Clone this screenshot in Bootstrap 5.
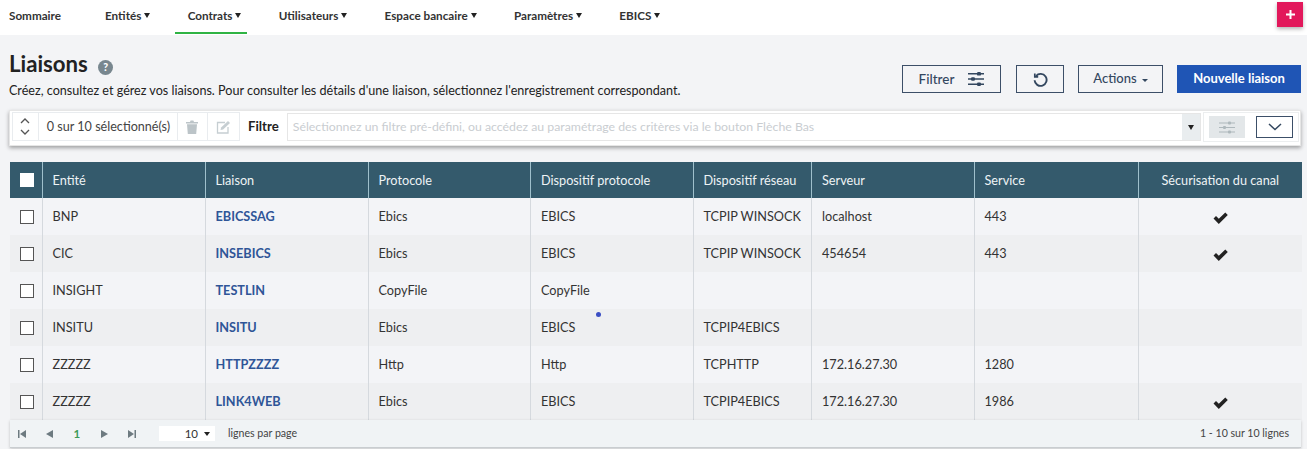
<!DOCTYPE html>
<html lang="fr">
<head>
  <meta charset="UTF-8" />
  <meta name="viewport" content="width=device-width, initial-scale=1" />
  <title>Liaisons</title>
  <link href="https://cdn.jsdelivr.net/npm/bootstrap@5.3.3/dist/css/bootstrap.min.css" rel="stylesheet" />
  <style>
    html, body { height: 449px; overflow: hidden; }
    body { background: #f3f4f6; font-family: Lato, "Liberation Sans", sans-serif; color: #2b2b2b; font-size: 12.7px; }

    /* barre du haut */
    .top-bar { height: 35px; background: #fff; padding-left: 9px; padding-right: 4px; }
    .top-link { position: relative; height: 35px; line-height: 31px; font-size: 11.7px; font-weight: 700; color: #333; text-decoration: none; white-space: nowrap; display: block; margin-right: 37.3px; }
    .top-link:first-child { margin-right: 44px; }
    .top-link.current::after { content: ""; position: absolute; left: -13px; right: -6px; bottom: 1px; height: 2px; background: #2fb344; }
    .caret-down { display: inline-block; border: 3.5px solid transparent; border-top: 5px solid #222; border-bottom: 0; margin-left: 3px; vertical-align: 2px; }
    .plus-btn { width: 26px; height: 25px; margin-top: 2px; background: #e2185b; color: #fff; border: 0; padding: 0; box-shadow: 0 2px 4px rgba(0,0,0,.3); display: flex; align-items: center; justify-content: center; }

    /* titre */
    .page-head { padding: 16px 6px 0 9px; height: 75px; }
    .page-title { font-size: 22.2px; font-weight: 700; line-height: 26px; margin: 0; color: #222; }
    .page-desc { font-size: 12.6px; line-height: 16px; margin: 6px 0 0; color: #222; white-space: nowrap; }
    .help-dot { display: inline-flex; width: 15px; height: 15px; border-radius: 50%; background: #78878f; color: #fff; font-size: 10.5px; font-weight: 900; align-items: center; justify-content: center; margin-left: 5px; vertical-align: 1px; }
    .head-btns { padding-top: 14px; gap: 14px; }
    .act-btn { height: 28px; border: 1px solid #3c4f68; border-radius: 0; background: transparent; color: #33475f; font-size: 13.5px; font-weight: 500; padding: 0; display: flex; align-items: center; justify-content: center; }
    .act-filter { width: 99px; gap: 14px; }
    .act-reset { width: 48px; margin-left: 1px; }
    .act-actions { width: 85px; font-size: 13px; }
    .act-new { width: 124px; background: #1f55b5; border-color: #1f55b5; color: #fff; font-size: 13px; font-weight: 700; }
    .caret-small { display: inline-block; border: 3px solid transparent; border-top: 3px solid #33475f; border-bottom: 0; margin-left: 5px; margin-top: 2px; }

    /* barre filtre */
    .filter-bar { margin: 0 6px 0 9px; height: 36px; background: #fff; box-shadow: 0 2px 4px rgba(0,0,0,.35); padding: 1px 1px 0 2px; border: 1px solid #e6e6e6; display: flex; align-items: flex-start; }
    .sel-group { display: flex; align-items: center; border: 1px solid #e9ecef; height: 29px; width: 228px; flex: none; }
    .sel-arrows { width: 26px; height: 100%; border-right: 1px solid #e9ecef; display: flex; flex-direction: column; align-items: center; justify-content: center; gap: 5px; }
    .sel-count { width: 140px; height: 100%; line-height: 27px; padding-left: 8px; font-size: 12.6px; color: #444; border-right: 1px solid #e9ecef; white-space: nowrap; }
    .sel-icon { width: 31px; height: 100%; display: flex; align-items: center; justify-content: center; }
    .filter-label { font-size: 13.2px; font-weight: 700; line-height: 28px; padding: 0 8px; color: #222; }
    .filter-input { flex: 1; height: 28px; margin-top: 1px; border: 1px solid #e6e6e6; background: #fff; display: flex; align-items: center; justify-content: space-between; min-width: 0; }
    .filter-input span { font-size: 12.3px; color: #c9cdd1; padding-left: 5px; white-space: nowrap; }
    .filter-drop { width: 18px; height: 100%; background: #e9edef; display: flex; align-items: center; justify-content: center; }
    .filter-drop i { display: block; border: 3.5px solid transparent; border-top: 5px solid #222; border-bottom: 0; }
    .filter-tools { width: 96px; height: 30px; margin-left: 2px; border: 1px solid #eceeef; flex: none; display: flex; align-items: center; gap: 11px; padding-left: 5px; }
    .tool-off { width: 36px; height: 22px; background: #e3e7e9; display: flex; align-items: center; justify-content: center; }
    .tool-on { width: 37px; height: 22px; border: 1px solid #3c4f68; background: #fff; display: flex; align-items: center; justify-content: center; }

    /* tableau */
    .grid-wrap { margin: 16px 6px 0 10px; }
    .grid-table { table-layout: fixed; width: 1291px; border-collapse: collapse; margin: 0; }
    .grid-table th { background: #345a6c; color: #eef3f5; font-weight: 400; font-size: 12.7px; height: 36px; padding: 1px 10px 0; border-left: 1px solid #9fc0cc; border-bottom: 0; vertical-align: middle; white-space: nowrap; }
    .grid-table th:first-child, .grid-table td:first-child { border-left: 0; padding: 0 0 0 10px; }
    .grid-table td { height: 37px; font-size: 12.7px; padding: 0 10px; color: #333; border-left: 1px solid #d5d9de; border-bottom: 0; vertical-align: middle; white-space: nowrap; background: #f3f4f7; }
    .grid-table tr.alt td { background: #eeeff1; }
    .grid-table td a { color: #2f5597; font-weight: 700; text-decoration: none; }
    .grid-table .mid { text-align: center; }
    .tick-box { display: block; width: 14px; height: 14px; border: 1px solid #555; background: #fff; }
    .tick-box.head { border-color: #fff; }
    .spot { position: absolute; left: 596px; top: 312px; width: 5px; height: 5px; border-radius: 50%; background: #3b4fc4; }

    /* pied */
    .grid-foot { height: 28px; background: #f0f3f5; border-bottom: 1px solid #c9cdd0; box-shadow: 0 1px 3px rgba(0,0,0,.2); font-size: 10.6px; color: #444; padding: 0 12px 0 0; display: flex; align-items: center; }
    .pager-item { width: 27.5px; flex: none; display: flex; justify-content: center; align-items: center; }
    .pager-item:first-child { margin-left: -2px; }
    .page-now { color: #3c9a58; font-weight: 700; font-size: 11.5px; }
    .size-box { width: 56px; height: 15px; background: #fff; margin-left: 13.5px; display: flex; align-items: center; justify-content: flex-end; gap: 6px; padding-right: 5px; font-size: 11.5px; color: #333; }
    .size-box i { display: block; border: 3.5px solid transparent; border-top: 4px solid #222; border-bottom: 0; }
    .size-label { margin-left: 13px; }
  </style>
</head>
<body>
  <nav class="top-bar d-flex justify-content-between">
    <div class="d-flex">
      <a class="top-link" href="#">Sommaire</a>
      <a class="top-link" href="#">Entités<span class="caret-down"></span></a>
      <a class="top-link current" href="#">Contrats<span class="caret-down"></span></a>
      <a class="top-link" href="#">Utilisateurs<span class="caret-down"></span></a>
      <a class="top-link" href="#">Espace bancaire<span class="caret-down"></span></a>
      <a class="top-link" href="#">Paramètres<span class="caret-down"></span></a>
      <a class="top-link" href="#">EBICS<span class="caret-down"></span></a>
    </div>
    <button class="plus-btn" type="button" aria-label="Ajouter">
      <svg width="11" height="11" viewBox="0 0 11 11"><path d="M5.5 1v9M1 5.5h9" stroke="#fff" stroke-width="2"/></svg>
    </button>
  </nav>

  <div class="page-head d-flex justify-content-between">
    <div>
      <h1 class="page-title">Liaisons <span class="help-dot">?</span></h1>
      <p class="page-desc">Créez, consultez et gérez vos liaisons. Pour consulter les détails d'une liaison, sélectionnez l'enregistrement correspondant.</p>
    </div>
    <div class="head-btns d-flex">
      <button class="act-btn act-filter" type="button">Filtrer
        <svg width="16" height="14" viewBox="0 0 16 14" fill="#33475f"><path d="M0 1h16v1.6H0zM0 6.2h16v1.6H0zM0 11.4h16V13H0z"/><rect x="9" y="0" width="4" height="3.6" rx="1.2"/><rect x="3" y="5.2" width="4" height="3.6" rx="1.2"/><rect x="9" y="10.4" width="4" height="3.6" rx="1.2"/></svg>
      </button>
      <button class="act-btn act-reset" type="button" aria-label="Réinitialiser">
        <svg width="15" height="15" viewBox="0 0 15 15" fill="none" stroke="#33475f" stroke-width="1.9"><path d="M3 4a6 6 0 1 1-1.4 4.2"/><path d="M1.8 1.5v3.4h3.4" stroke-width="1.7"/></svg>
      </button>
      <button class="act-btn act-actions" type="button">Actions<span class="caret-small"></span></button>
      <button class="act-btn act-new" type="button">Nouvelle liaison</button>
    </div>
  </div>

  <div class="filter-bar">
    <div class="sel-group">
      <div class="sel-arrows">
        <svg width="10" height="6" viewBox="0 0 10 6" fill="none" stroke="#555" stroke-width="1.3"><path d="M1 5l4-4 4 4"/></svg>
        <svg width="10" height="6" viewBox="0 0 10 6" fill="none" stroke="#555" stroke-width="1.3"><path d="M1 1l4 4 4-4"/></svg>
      </div>
      <div class="sel-count">0 sur 10 sélectionné(s)</div>
      <div class="sel-icon" style="border-right:1px solid #e9ecef">
        <svg width="12" height="14" viewBox="0 0 12 14" fill="#bcc4c8"><path d="M0 2h4l.6-1.5h2.800L8 2h4v1.400H0zM1 4.200h10L10.200 14H1.800z"/></svg>
      </div>
      <div class="sel-icon">
        <svg width="15" height="14" viewBox="0 0 15 14" fill="none" stroke="#c6ced2" stroke-width="1.3"><path d="M9 2.500H1.500v10.500H12V7"/><path d="M4.500 10l.6-2.600L12 1l2 2-6.900 6.400z" fill="#c6ced2" stroke="none"/></svg>
      </div>
    </div>
    <div class="filter-label">Filtre</div>
    <div class="filter-input">
      <span>Sélectionnez un filtre pré-défini, ou accédez au paramétrage des critères via le bouton Flèche Bas</span>
      <div class="filter-drop"><i></i></div>
    </div>
    <div class="filter-tools">
      <div class="tool-off">
        <svg width="16" height="13" viewBox="0 0 16 13" fill="#aeb8bc"><path d="M0 1.500h16v1H0zM0 6h16v1H0zM0 10.500h16v1H0z"/><rect x="9" y="0.500" width="3" height="3" rx="1"/><rect x="4" y="5" width="3" height="3" rx="1"/><rect x="9" y="9.500" width="3" height="3" rx="1"/></svg>
      </div>
      <div class="tool-on">
        <svg width="14" height="8" viewBox="0 0 14 8" fill="none" stroke="#33475f" stroke-width="1.5"><path d="M1 1l6 5.500L13 1"/></svg>
      </div>
    </div>
  </div>

  <div class="grid-wrap">
    <table class="grid-table">
      <colgroup>
        <col style="width:32px"><col style="width:163px"><col style="width:163px"><col style="width:162.5px"><col style="width:162.5px"><col style="width:118.5px"><col style="width:162.5px"><col style="width:164.5px"><col style="width:163px">
      </colgroup>
      <thead>
        <tr>
          <th><span class="tick-box head"></span></th>
          <th>Entité</th><th>Liaison</th><th>Protocole</th><th>Dispositif protocole</th><th>Dispositif réseau</th><th>Serveur</th><th>Service</th><th class="mid">Sécurisation du canal</th>
        </tr>
      </thead>
      <tbody id="lignes"></tbody>
    </table>
    <div class="grid-foot">
      <span class="pager-item">
        <svg width="8" height="8" viewBox="0 0 8 8" fill="#6d7a80"><path d="M0 0h1.500v8H0zM8 0v8L2 4z"/></svg>
      </span>
      <span class="pager-item"><svg width="7" height="8" viewBox="0 0 7 8" fill="#6d7a80"><path d="M7 0v8L0 4z"/></svg></span>
      <span class="pager-item page-now">1</span>
      <span class="pager-item"><svg width="7" height="8" viewBox="0 0 7 8" fill="#6d7a80"><path d="M0 0v8l7-4z"/></svg></span>
      <span class="pager-item"><svg width="8" height="8" viewBox="0 0 8 8" fill="#6d7a80"><path d="M0 0v8l6-4zM6.500 0H8v8H6.500z"/></svg></span>
      <div class="size-box">10 <i></i></div>
      <span class="size-label">lignes par page</span>
      <span class="ms-auto">1 - 10 sur 10 lignes</span>
    </div>
  </div>
  <span class="spot"></span>

  <script>
    var lignes = [
      ['BNP', 'EBICSSAG', 'Ebics', 'EBICS', 'TCPIP WINSOCK', 'localhost', '443', true],
      ['CIC', 'INSEBICS', 'Ebics', 'EBICS', 'TCPIP WINSOCK', '454654', '443', true],
      ['INSIGHT', 'TESTLIN', 'CopyFile', 'CopyFile', '', '', '', false],
      ['INSITU', 'INSITU', 'Ebics', 'EBICS', 'TCPIP4EBICS', '', '', false],
      ['ZZZZZ', 'HTTPZZZZ', 'Http', 'Http', 'TCPHTTP', '172.16.27.30', '1280', false],
      ['ZZZZZ', 'LINK4WEB', 'Ebics', 'EBICS', 'TCPIP4EBICS', '172.16.27.30', '1986', true]
    ];
    var coche = '<svg width="15" height="12" viewBox="0 0 15 12" fill="#222"><path d="M0.500 6.500L3 4l2.800 2.800L12.300 0.500 14.800 3 5.800 12z"/></svg>';
    var html = '';
    lignes.forEach(function (l, i) {
      html += '<tr' + (i % 2 ? ' class="alt"' : '') + '>' +
        '<td><span class="tick-box"></span></td>' +
        '<td>' + l[0] + '</td>' +
        '<td><a href="#">' + l[1] + '</a></td>' +
        '<td>' + l[2] + '</td><td>' + l[3] + '</td><td>' + l[4] + '</td><td>' + l[5] + '</td><td>' + l[6] + '</td>' +
        '<td class="mid">' + (l[7] ? coche : '') + '</td></tr>';
    });
    document.getElementById('lignes').innerHTML = html;
  </script>
  <script src="https://cdn.jsdelivr.net/npm/bootstrap@5.3.3/dist/js/bootstrap.bundle.min.js"></script>
</body>
</html>
